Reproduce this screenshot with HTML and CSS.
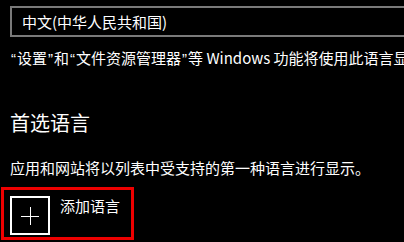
FILE: index.html
```html
<!DOCTYPE html>
<html lang="zh-CN">
<head>
<meta charset="utf-8">
<link rel="stylesheet" href="styles.css">
</head>
<body>
<div class="page">
  <div class="select">中文(中华人民共和国)</div>
  <p class="desc"><span class="q">“</span>设置<span class="q">”</span>和<span class="q">“</span>文件资源管理器<span class="q">”</span>等 Windows 功能将使用此语言显示。</p>
  <h2 class="heading">首选语言</h2>
  <p class="body">应用和网站将以列表中受支持的第一种语言进行显示。</p>
  <div class="add">
    <div class="plus-box">
      <svg width="18" height="18" viewBox="0 0 18 18"><path d="M9 0V18M0 9H18" stroke="#fff" stroke-width="1" fill="none" shape-rendering="crispEdges"/></svg>
    </div>
    <span class="add-label">添加语言</span>
  </div>
</div>
</body>
</html>
```

FILE: styles.css
```css
html, body {
  margin: 0;
  padding: 0;
  background: #000;
  overflow: hidden;
}
.page {
  width: 404px;
  height: 242px;
  padding-left: 10px;
  box-sizing: border-box;
  font-family: "Noto Sans CJK SC", "Noto Sans", sans-serif;
  color: #fff;
  overflow: hidden;
}
.select {
  margin-top: 6px;
  width: 420px;
  height: 31px;
  box-sizing: border-box;
  border: 2px solid #7a7a7a;
  padding-left: 10px;
  font-size: 15px;
  line-height: 27px;
  white-space: nowrap;
}
.desc {
  margin: 11px 0 0;
  font-size: 15px;
  line-height: 20px;
  white-space: nowrap;
}
.q {
  font-family: "Liberation Sans", sans-serif;
  padding: 0 1px;
}
.heading {
  margin: 40px 0 0;
  font-size: 20px;
  font-weight: 400;
  line-height: 28px;
}
.body {
  margin: 21px 0 0;
  font-size: 15px;
  line-height: 20px;
  white-space: nowrap;
}
.add {
  margin: 9px 0 0 -9px;
  width: 133px;
  height: 53px;
  box-sizing: border-box;
  border: 3px solid #ee0000;
  padding: 6px 0 0 6px;
  display: flex;
  align-items: flex-start;
  gap: 10px;
}
.plus-box {
  width: 40px;
  height: 39px;
  box-sizing: border-box;
  border: 2px solid #fff;
  display: flex;
  align-items: center;
  justify-content: center;
}
.plus-box svg {
  display: block;
}
.add-label {
  font-size: 15px;
  line-height: 20px;
}
```
